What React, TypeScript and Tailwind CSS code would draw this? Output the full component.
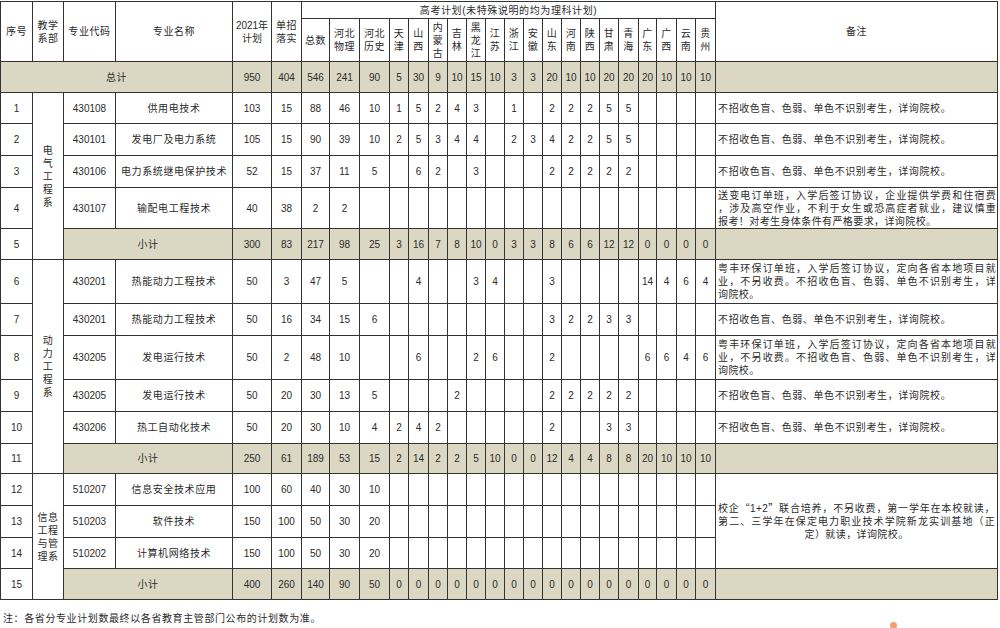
import React from "react";

const FONT = { fontFamily: '"Liberation Sans", "Noto Sans CJK SC", sans-serif' };

const cols = [
  "总数", "河北物理", "河北历史", "天津", "山西", "内蒙古", "吉林", "黑龙江", "江苏", "浙江",
  "安徽", "山东", "河南", "陕西", "甘肃", "青海", "广东", "广西", "云南", "贵州",
];

// column widths, px
const widths = [
  32, 31, 52, 117, 39, 30,
  28, 30, 30,
  19, 20, 19, 19, 19, 19, 19, 19, 19, 19, 19, 19, 20, 18, 20, 19, 20,
  282,
];

const NOTE_COLOR = "不招收色盲、色弱、单色不识别考生，详询院校。";
const NOTE_YUE = [
  "粤丰环保订单班，入学后签订协议，定向各省本地项目就",
  "业，不另收费。不招收色盲、色弱、单色不识别考生，详",
  "询院校。",
];

type Row =
  | { kind: "item"; no: number; code: string; name: string; plan: number; dz: number; v: Record<string, number>; note?: string | string[]; h: number }
  | { kind: "sub"; no: number; plan: number; dz: number; all: number[]; h: number };

const rows: Row[] = [
  { kind: "item", no: 1, code: "430108", name: "供用电技术", plan: 103, dz: 15, h: 31,
    v: { 总数: 88, 河北物理: 46, 河北历史: 10, 天津: 1, 山西: 5, 内蒙古: 2, 吉林: 4, 黑龙江: 3, 浙江: 1, 山东: 2, 河南: 2, 陕西: 2, 甘肃: 5, 青海: 5 }, note: NOTE_COLOR },
  { kind: "item", no: 2, code: "430101", name: "发电厂及电力系统", plan: 105, dz: 15, h: 32,
    v: { 总数: 90, 河北物理: 39, 河北历史: 10, 天津: 2, 山西: 5, 内蒙古: 3, 吉林: 4, 黑龙江: 4, 浙江: 2, 安徽: 3, 山东: 4, 河南: 2, 陕西: 2, 甘肃: 5, 青海: 5 }, note: NOTE_COLOR },
  { kind: "item", no: 3, code: "430106", name: "电力系统继电保护技术", plan: 52, dz: 15, h: 32,
    v: { 总数: 37, 河北物理: 11, 河北历史: 5, 山西: 6, 内蒙古: 2, 黑龙江: 3, 山东: 2, 河南: 2, 陕西: 2, 甘肃: 2, 青海: 2 }, note: NOTE_COLOR },
  { kind: "item", no: 4, code: "430107", name: "输配电工程技术", plan: 40, dz: 38, h: 41,
    v: { 总数: 2, 河北物理: 2 },
    note: ["送变电订单班，入学后签订协议，企业提供学费和住宿费", "，涉及高空作业，不利于女生或恐高症者就业，建议慎重", "报考！对考生身体条件有严格要求，详询院校。"] },
  { kind: "sub", no: 5, plan: 300, dz: 83, h: 31, all: [217, 98, 25, 3, 16, 7, 8, 10, 0, 3, 3, 8, 6, 6, 12, 12, 0, 0, 0, 0] },
  { kind: "item", no: 6, code: "430201", name: "热能动力工程技术", plan: 50, dz: 3, h: 44,
    v: { 总数: 47, 河北物理: 5, 山西: 4, 黑龙江: 3, 江苏: 4, 山东: 3, 广东: 14, 广西: 4, 云南: 6, 贵州: 4 }, note: NOTE_YUE },
  { kind: "item", no: 7, code: "430201", name: "热能动力工程技术", plan: 50, dz: 16, h: 32,
    v: { 总数: 34, 河北物理: 15, 河北历史: 6, 山东: 3, 河南: 2, 陕西: 2, 甘肃: 3, 青海: 3 }, note: NOTE_COLOR },
  { kind: "item", no: 8, code: "430205", name: "发电运行技术", plan: 50, dz: 2, h: 44,
    v: { 总数: 48, 河北物理: 10, 山西: 6, 黑龙江: 2, 江苏: 6, 山东: 2, 广东: 6, 广西: 6, 云南: 4, 贵州: 6 }, note: NOTE_YUE },
  { kind: "item", no: 9, code: "430205", name: "发电运行技术", plan: 50, dz: 20, h: 32,
    v: { 总数: 30, 河北物理: 13, 河北历史: 5, 吉林: 2, 山东: 2, 河南: 2, 陕西: 2, 甘肃: 2, 青海: 2 }, note: NOTE_COLOR },
  { kind: "item", no: 10, code: "430206", name: "热工自动化技术", plan: 50, dz: 20, h: 32,
    v: { 总数: 30, 河北物理: 10, 河北历史: 4, 天津: 2, 山西: 4, 内蒙古: 2, 山东: 2, 甘肃: 3, 青海: 3 }, note: NOTE_COLOR },
  { kind: "sub", no: 11, plan: 250, dz: 61, h: 30, all: [189, 53, 15, 2, 14, 2, 2, 5, 10, 0, 0, 12, 4, 4, 8, 8, 20, 10, 10, 10] },
  { kind: "item", no: 12, code: "510207", name: "信息安全技术应用", plan: 100, dz: 60, h: 32,
    v: { 总数: 40, 河北物理: 30, 河北历史: 10 } },
  { kind: "item", no: 13, code: "510203", name: "软件技术", plan: 150, dz: 100, h: 32,
    v: { 总数: 50, 河北物理: 30, 河北历史: 20 } },
  { kind: "item", no: 14, code: "510202", name: "计算机网络技术", plan: 150, dz: 100, h: 31,
    v: { 总数: 50, 河北物理: 30, 河北历史: 20 } },
  { kind: "sub", no: 15, plan: 400, dz: 260, h: 31, all: [140, 90, 50, 0, 0, 0, 0, 0, 0, 0, 0, 0, 0, 0, 0, 0, 0, 0, 0, 0] },
];

const depts: Record<number, { span: number; lines: string[] }> = {
  1: { span: 5, lines: ["电", "气", "工", "程", "系"] },
  6: { span: 6, lines: ["动", "力", "工", "程", "系"] },
  12: { span: 4, lines: ["信息", "工程", "与管", "理系"] },
};

const td = "border border-[#333] p-0 text-center align-middle";
const sub = "bg-[#dbd7c3]";
const cn = "tracking-[0.6px]";

function Stack({ text }: { text: string }) {
  return (
    <div className={`leading-[13px] ${cn}`}>
      {text.split("").map((c, i) => (
        <div key={i}>{c}</div>
      ))}
    </div>
  );
}

function Note({ note }: { note: string | string[] }) {
  if (typeof note === "string") {
    return <div className={`text-left pl-[2px] ${cn}`}>{note}</div>;
  }
  return (
    <div className="text-left pl-[2px] pr-[1px] leading-[13px] tracking-[0.4px]">
      {note.map((l, i) => (
        <div key={i} className={i < note.length - 1 ? "[text-align-last:justify]" : ""}>
          {l}
        </div>
      ))}
    </div>
  );
}

export default function App() {
  return (
    <div className="w-[1000px] h-[628px] bg-white text-[#2b2b2b] text-[10px] overflow-hidden relative" style={FONT}>
      <table className="table-fixed border-collapse w-[997px] mt-px">
        <colgroup>
          {widths.map((w, i) => (
            <col key={i} style={{ width: w }} />
          ))}
        </colgroup>
        <thead>
          <tr className="h-[17px]">
            <th rowSpan={2} className={`${td} font-normal ${cn}`}>序号</th>
            <th rowSpan={2} className={`${td} font-normal leading-[13px] ${cn}`}>教学<br />系部</th>
            <th rowSpan={2} className={`${td} font-normal ${cn}`}>专业代码</th>
            <th rowSpan={2} className={`${td} font-normal ${cn}`}>专业名称</th>
            <th rowSpan={2} className={`${td} font-normal leading-[13px]`}>2021年<br />计划</th>
            <th rowSpan={2} className={`${td} font-normal leading-[13px] ${cn}`}>单招<br />落实</th>
            <th colSpan={20} className={`${td} font-normal ${cn}`}>高考计划(未特殊说明的均为理科计划)</th>
            <th rowSpan={2} className={`${td} font-normal ${cn}`}>备注</th>
          </tr>
          <tr className="h-[43px]">
            {cols.map((c, i) => (
              <th key={c} className={`${td} font-normal`}>
                {i === 0 ? (
                  <span className={cn}>{c}</span>
                ) : i < 3 ? (
                  <div className={`leading-[13px] ${cn}`}>{c.slice(0, 2)}<br />{c.slice(2)}</div>
                ) : (
                  <Stack text={c} />
                )}
              </th>
            ))}
          </tr>
        </thead>
        <tbody>
          <tr className="h-[31px]">
            <td colSpan={4} className={`${td} ${sub} ${cn}`}>总计</td>
            <td className={`${td} ${sub}`}>950</td>
            <td className={`${td} ${sub}`}>404</td>
            {[546, 241, 90, 5, 30, 9, 10, 15, 10, 3, 3, 20, 10, 10, 20, 20, 20, 10, 10, 10].map((n, i) => (
              <td key={i} className={`${td} ${sub}`}>{n}</td>
            ))}
            <td className={`${td} ${sub}`}></td>
          </tr>
          {rows.map((r) => {
            const dept = depts[r.no];
            const deptCell = dept ? (
              <td rowSpan={dept.span} className={td}>
                <div className={`leading-[13px] ${cn}`}>
                  {dept.lines.map((l, i) => (
                    <div key={i}>{l}</div>
                  ))}
                </div>
              </td>
            ) : null;
            if (r.kind === "sub") {
              return (
                <tr key={r.no} style={{ height: r.h }}>
                  <td className={td}>{r.no}</td>
                  {deptCell}
                  <td colSpan={2} className={`${td} ${sub} ${cn}`}>小计</td>
                  <td className={`${td} ${sub}`}>{r.plan}</td>
                  <td className={`${td} ${sub}`}>{r.dz}</td>
                  {r.all.map((n, i) => (
                    <td key={i} className={`${td} ${sub}`}>{n}</td>
                  ))}
                  <td className={`${td} ${sub}`}></td>
                </tr>
              );
            }
            return (
              <tr key={r.no} style={{ height: r.h }}>
                <td className={td}>{r.no}</td>
                {deptCell}
                <td className={td}>{r.code}</td>
                <td className={`${td} ${cn}`}>{r.name}</td>
                <td className={td}>{r.plan}</td>
                <td className={td}>{r.dz}</td>
                {cols.map((c) => (
                  <td key={c} className={td}>{r.v[c] ?? ""}</td>
                ))}
                {r.no === 12 ? (
                  <td rowSpan={3} className={td}>
                    <div className="px-[2px] leading-[13px] tracking-[0.4px]">
                      <div className="[text-align-last:justify]">
                        校企<span className="font-['Noto_Sans_CJK_SC']">“</span>1+2<span className="font-['Noto_Sans_CJK_SC']">”</span>联合培养，不另收费，第一学年在本校就读，
                      </div>
                      <div className="[text-align-last:justify]">第二、三学年在保定电力职业技术学院新龙实训基地（正</div>
                      <div className="text-center">定）就读，详询院校。</div>
                    </div>
                  </td>
                ) : r.no === 13 || r.no === 14 ? null : (
                  <td className={td}>{r.note ? <Note note={r.note} /> : null}</td>
                )}
              </tr>
            );
          })}
        </tbody>
      </table>
      <div className={`mt-[11px] pl-[3px] ${cn}`}>注：各省分专业计划数最终以各省教育主管部门公布的计划数为准。</div>
      <div className="absolute left-[890px] top-[622px] w-[7px] h-[7px] rounded-full bg-[#f0a070]" />
    </div>
  );
}
